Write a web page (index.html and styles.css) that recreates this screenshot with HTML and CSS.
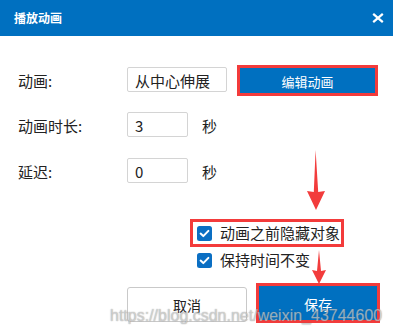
FILE: index.html
```html
<!DOCTYPE html>
<html lang="zh-CN">
<head>
<meta charset="utf-8">
<title>播放动画</title>
<link rel="stylesheet" href="styles.css">
</head>
<body>
<div class="dialog">
  <div class="titlebar">
    <span class="title">播放动画</span>
    <svg class="close" width="12" height="10" viewBox="0 0 12 10"><path d="M1.2 0.8 L10.8 9.2 M10.8 0.8 L1.2 9.2" stroke="#fff" stroke-width="2.2" fill="none"/></svg>
  </div>
  <div class="body">
    <div class="row r1">
      <span class="label">动画:</span>
      <span class="field wide">从中心伸展</span>
      <button class="btn primary mark edit">编辑动画</button>
    </div>
    <div class="row r2">
      <span class="label">动画时长:</span>
      <span class="field">3</span>
      <span class="unit">秒</span>
    </div>
    <div class="row r3">
      <span class="label">延迟:</span>
      <span class="field">0</span>
      <span class="unit">秒</span>
    </div>
    <div class="checks">
      <label class="check mark">
        <svg class="box" width="15" height="15" viewBox="0 0 15 15"><rect width="15" height="15" rx="2.5" fill="#0b6fc3"/><path d="M3.6 7.6 L6.3 10.1 L11.4 4.9" stroke="#fff" stroke-width="2" fill="none" stroke-linecap="round" stroke-linejoin="round"/></svg>
        <span>动画之前隐藏对象</span>
      </label>
      <label class="check second">
        <svg class="box" width="15" height="15" viewBox="0 0 15 15"><rect width="15" height="15" rx="2.5" fill="#0b6fc3"/><path d="M3.6 7.6 L6.3 10.1 L11.4 4.9" stroke="#fff" stroke-width="2" fill="none" stroke-linecap="round" stroke-linejoin="round"/></svg>
        <span>保持时间不变</span>
      </label>
    </div>
    <div class="actions">
      <button class="btn cancel">取消</button>
      <button class="btn primary mark save">保存</button>
    </div>
  </div>
  <svg class="arrows" width="393" height="335" viewBox="0 0 393 335">
    <polygon points="315.6,150 318.2,192 325,191 316,210 307,191 313.8,192" fill="#f23c3c"/>
    <polygon points="319,250 321,271 326,270 319,284 312,270 317,271" fill="#f23c3c"/>
  </svg>
  <div class="watermark">https://blog.csdn.net/weixin_43744600</div>
</div>
</body>
</html>
```

FILE: styles.css
```css
* { box-sizing: border-box; }

html, body {
  margin: 0;
  padding: 0;
  background: #fff;
}

body {
  font-family: "Noto Sans CJK SC", "Noto Sans", sans-serif;
  color: #222;
}

.dialog {
  position: relative;
  width: 393px;
  height: 335px;
  overflow: hidden;
  background: #fff;
}

.titlebar {
  height: 36px;
  background: #0070c0;
  display: flex;
  align-items: center;
  justify-content: space-between;
  padding: 0 9px 0 14px;
  color: #fff;
}

.title {
  font-size: 12px;
  font-weight: 700;
  line-height: 16px;
}

.close { display: block; margin-top: 0; }

.body {
  padding: 31px 16px 0 18px;
}

.row {
  display: flex;
  align-items: flex-start;
  height: 25px;
}

.r2 { margin-top: 20px; }
.r3 { margin-top: 21px; }

.label {
  width: 109px;
  font-size: 15px;
  line-height: 20px;
  padding-top: 4px;
  color: #222;
}

.field {
  width: 61px;
  height: 25px;
  border: 1px solid #d4d4d4;
  border-radius: 2px;
  padding: 3px 0 0 7px;
  font-size: 15px;
  line-height: 20px;
  color: #222;
  background: #fff;
}

.field.wide { width: 100px; }

.unit {
  margin-left: 14px;
  font-size: 15px;
  line-height: 20px;
  padding-top: 4px;
}

.btn {
  font-family: inherit;
  border: 1px solid #c9c9c9;
  border-radius: 3px;
  background: #fff;
  color: #222;
  font-size: 14px;
  line-height: 18px;
  padding: 0;
  display: flex;
  align-items: center;
  justify-content: center;
}

.btn.primary {
  background: #0070c0;
  border-color: #0070c0;
  border-radius: 0;
  color: #fff;
}

.mark {
  outline: 3px solid #f33b3b;
}

.edit {
  width: 135px;
  height: 25px;
  margin-left: 13px;
  margin-top: 1px;
  font-size: 13px;
  padding-top: 2px;
}

.checks {
  margin-top: 39px;
  padding-left: 175px;
}

.check {
  display: flex;
  align-items: center;
  gap: 8px;
  width: 148px;
  height: 22px;
  padding-left: 4px;
  font-size: 15px;
  line-height: 20px;
  color: #222;
}

.check .box { display: block; flex: none; margin-top: 1px; }

.check.second { margin-top: 5px; }

.actions {
  display: flex;
  align-items: flex-start;
  margin-top: 16px;
  padding-left: 109px;
}

.cancel {
  width: 120px;
  height: 35px;
  padding-top: 1px;
}

.save {
  width: 118px;
  height: 34px;
  margin-left: 12px;
  margin-top: -1px;
  padding-top: 1px;
}

.arrows {
  position: absolute;
  left: 0;
  top: 0;
  pointer-events: none;
}

.watermark {
  position: absolute;
  left: 110px;
  top: 308px;
  font-family: "Liberation Sans", Arial, sans-serif;
  font-size: 16px;
  line-height: 16px;
  color: rgba(255, 255, 255, 0.45);
  text-shadow: 0 0 1px rgba(110, 110, 110, 0.55), 0 0 1px rgba(110, 110, 110, 0.35);
  white-space: nowrap;
  pointer-events: none;
}
```
